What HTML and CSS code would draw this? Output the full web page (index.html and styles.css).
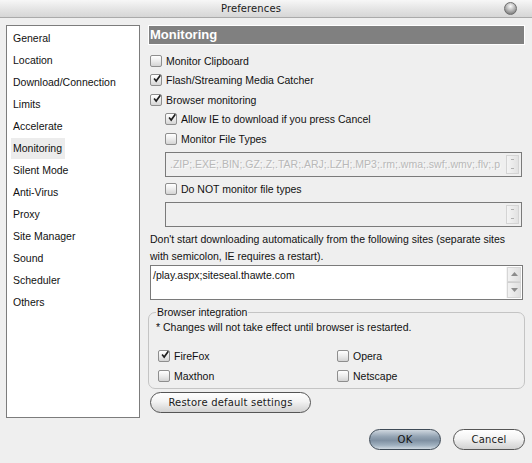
FILE: index.html
```html
<!DOCTYPE html>
<html>
<head>
<meta charset="utf-8">
<title>Preferences</title>
<link rel="stylesheet" href="styles.css">
</head>
<body>
<div class="window">
  <div class="titlebar">
    <span class="title">Preferences</span>
    <span class="close"></span>
  </div>
  <div class="main">
    <ul class="sidebar">
      <li>General</li>
      <li>Location</li>
      <li>Download/Connection</li>
      <li>Limits</li>
      <li>Accelerate</li>
      <li><span class="sel">Monitoring</span></li>
      <li>Silent Mode</li>
      <li>Anti-Virus</li>
      <li>Proxy</li>
      <li>Site Manager</li>
      <li>Sound</li>
      <li>Scheduler</li>
      <li>Others</li>
    </ul>
    <div class="content">
      <div class="header">Monitoring</div>
      <div class="checks">
        <div class="row"><span class="cb"></span>Monitor Clipboard</div>
        <div class="row"><span class="cb on"><svg viewBox="0 0 12 12"><path d="M2.5 5.5 L5 8.5 L10 1.5"/></svg></span>Flash/Streaming Media Catcher</div>
        <div class="row"><span class="cb on"><svg viewBox="0 0 12 12"><path d="M2.5 5.5 L5 8.5 L10 1.5"/></svg></span>Browser monitoring</div>
        <div class="row sub"><span class="cb on"><svg viewBox="0 0 12 12"><path d="M2.5 5.5 L5 8.5 L10 1.5"/></svg></span>Allow IE to download if you press Cancel</div>
        <div class="row sub"><span class="cb"></span>Monitor File Types</div>
      </div>
      <div class="field">
        <span class="ftext">.ZIP;.EXE;.BIN;.GZ;.Z;.TAR;.ARJ;.LZH;.MP3;.rm;.wma;.swf;.wmv;.flv;.p</span>
        <span class="spin"><i></i><i></i></span>
      </div>
      <div class="row sub gap"><span class="cb"></span>Do NOT monitor file types</div>
      <div class="field">
        <span class="ftext"></span>
        <span class="spin"><i></i><i></i></span>
      </div>
      <p class="note">Don't start downloading automatically from the following sites (separate sites with semicolon, IE requires a restart).</p>
      <div class="textarea">
        <span class="tatext">/play.aspx;siteseal.thawte.com</span>
        <span class="vscroll">
          <span class="arr"><svg viewBox="0 0 7 4"><path d="M0 4 L3.5 0 L7 4Z"/></svg></span>
          <span class="arr"><svg viewBox="0 0 7 4"><path d="M0 0 L3.5 4 L7 0Z"/></svg></span>
        </span>
      </div>
      <fieldset class="group">
        <legend>Browser integration</legend>
        <div class="gnote">* Changes will not take effect until browser is restarted.</div>
        <div class="browsers">
          <div class="row"><span class="cb on"><svg viewBox="0 0 12 12"><path d="M2.5 5.5 L5 8.5 L10 1.5"/></svg></span>FireFox</div>
          <div class="row"><span class="cb"></span>Opera</div>
          <div class="row"><span class="cb"></span>Maxthon</div>
          <div class="row"><span class="cb"></span>Netscape</div>
        </div>
      </fieldset>
      <button class="btn restore">Restore default settings</button>
    </div>
  </div>
  <div class="footer">
    <button class="btn ok">OK</button>
    <button class="btn cancel">Cancel</button>
  </div>
</div>
</body>
</html>
```

FILE: styles.css
```css
html, body {
  margin: 0;
  padding: 0;
}
body {
  background: #efefef;
  font-family: "Liberation Sans", Arial, sans-serif;
  font-size: 10.5px;
  color: #111;
}
.window {
  width: 532px;
  height: 463px;
  display: flex;
  flex-direction: column;
  overflow: hidden;
}
.titlebar {
  height: 17px;
  border-bottom: 1px solid #aaaaaa;
  background: linear-gradient(#f7f7f7, #e2e2e2 60%, #d6d6d6);
  display: flex;
  align-items: center;
}
.title {
  flex: 1;
  text-align: center;
  font-family: "DejaVu Sans", sans-serif;
  font-size: 10px;
  color: #1a1a1a;
  letter-spacing: 0.1px;
}
.close {
  width: 11px;
  height: 11px;
  margin: 0 15px 0 2px;
  border-radius: 50%;
  border: 1px solid #6d6d6d;
  background: radial-gradient(circle at 50% 30%, #fafafa 0, #c8c8c8 35%, #8a8a8a 75%, #6a6a6a 100%);
}
.main {
  display: flex;
  padding: 7px 7px 0 6px;
  gap: 8px;
}
.sidebar {
  box-sizing: border-box;
  width: 134px;
  height: 393px;
  margin: 0;
  padding: 1px 0 0 6px;
  list-style: none;
  background: #fff;
  border: 1px solid #7c7c7c;
  flex-shrink: 0;
}
.sidebar li {
  height: 22px;
  line-height: 22px;
}
.sel {
  display: inline-block;
  line-height: 21px;
  background: #ececec;
  margin-left: -2px;
  padding: 0 3px 0 2px;
}
.content {
  width: 377px;
  display: flex;
  flex-direction: column;
}
.header {
  height: 18px;
  line-height: 18px;
  border: 1px solid #ffffff;
  background: #808080;
  color: #fff;
  font-weight: bold;
  font-size: 13px;
  padding-left: 1px;
}
.checks {
  margin-top: 6px;
  display: flex;
  flex-direction: column;
}
.row {
  height: 19.5px;
  display: flex;
  align-items: center;
  padding-left: 2px;
  white-space: nowrap;
}
.row.sub {
  padding-left: 17px;
}
.row.gap {
  margin-top: 2.5px;
}
.cb {
  box-sizing: border-box;
  width: 12px;
  height: 12px;
  margin-right: 4px;
  border: 1px solid #8e8e8e;
  border-radius: 2px;
  background: linear-gradient(#ffffff, #ececec 50%, #d4d4d4);
  display: inline-flex;
  align-items: center;
  justify-content: center;
  flex-shrink: 0;
}
.cb svg {
  width: 10px;
  height: 10px;
  margin-top: -2px;
  margin-left: 1px;
  overflow: visible;
}
.cb svg path {
  fill: none;
  stroke: #1e1e1e;
  stroke-width: 2;
}
.field {
  box-sizing: border-box;
  margin: 3px 0 0 17px;
  width: 357px;
  height: 25px;
  border: 1px solid #7a7a7a;
  background: #efefef;
  display: flex;
  align-items: center;
  padding: 0 2px 0 4px;
  overflow: hidden;
}
.ftext {
  flex: 1;
  overflow: hidden;
  white-space: nowrap;
  color: #b8b8b8;
  text-shadow: 1px 1px 0 #fafafa;
  font-size: 10.5px;
}
.spin {
  box-sizing: border-box;
  width: 13px;
  height: 19px;
  border: 1px solid #d4d4d4;
  background: linear-gradient(90deg, #f4f4f4, #e2e2e2);
  display: flex;
  flex-direction: column;
  align-items: center;
  justify-content: space-around;
  margin-left: 2px;
}
.spin i {
  display: block;
  width: 3px;
  height: 1px;
  background: #b0b0b0;
}
.note {
  margin: 4px 0 0 2px;
  line-height: 17px;
  width: 372px;
}
.textarea {
  box-sizing: border-box;
  margin-left: 2px;
  width: 373px;
  height: 35px;
  background: #fff;
  border: 1px solid #7a7a7a;
  display: flex;
  padding: 1px;
}
.tatext {
  flex: 1;
  padding: 2px 0 0 1px;
  font-size: 10.5px;
}
.vscroll {
  width: 14px;
  display: flex;
  flex-direction: column;
  background: #eeeeee;
  border-left: 1px solid #f4f4f4;
}
.arr {
  flex: 1;
  display: flex;
  align-items: center;
  justify-content: center;
  background: linear-gradient(90deg, #f2f2f2, #e0e0e0);
  border: 1px solid #d6d6d6;
}
.arr + .arr {
  border-top: 1px solid #cfcfcf;
}
.arr svg {
  width: 7px;
  height: 4px;
}
.arr svg path {
  fill: #8c8c8c;
}
.group {
  margin: 6px 0 0 0;
  padding: 0 7px 2px 7px;
  border: 1px solid #c4c4c4;
  border-radius: 7px;
  min-width: 0;
}
.group legend {
  padding: 0 1px;
  line-height: 13px;
}
.gnote {
  height: 16px;
  line-height: 16px;
}
.browsers {
  margin-top: 11px;
  display: grid;
  grid-template-columns: 179px 1fr;
}
.browsers .row {
  height: 20px;
  padding-left: 2px;
}
.btn {
  box-sizing: border-box;
  height: 21px;
  border: 1px solid #555555;
  border-radius: 11px;
  font-family: "DejaVu Sans", sans-serif;
  font-size: 10px;
  color: #1a1a1a;
  background: linear-gradient(#ffffff, #f3f3f3 45%, #e3e3e3 70%, #d2d2d2);
  padding: 0;
  letter-spacing: 0.2px;
}
.restore {
  margin: 3px 0 0 2px;
  width: 161px;
  align-self: flex-start;
}
.footer {
  display: flex;
  justify-content: flex-end;
  gap: 12px;
  padding-right: 7px;
  margin-top: 11px;
}
.ok, .cancel {
  width: 72px;
}
.ok {
  border-color: #3e4a56;
  background: linear-gradient(#cfd7df, #93a3b3 35%, #7f90a2 55%, #9fb0bf 80%, #d0d9e1);
  color: #111;
}
```
